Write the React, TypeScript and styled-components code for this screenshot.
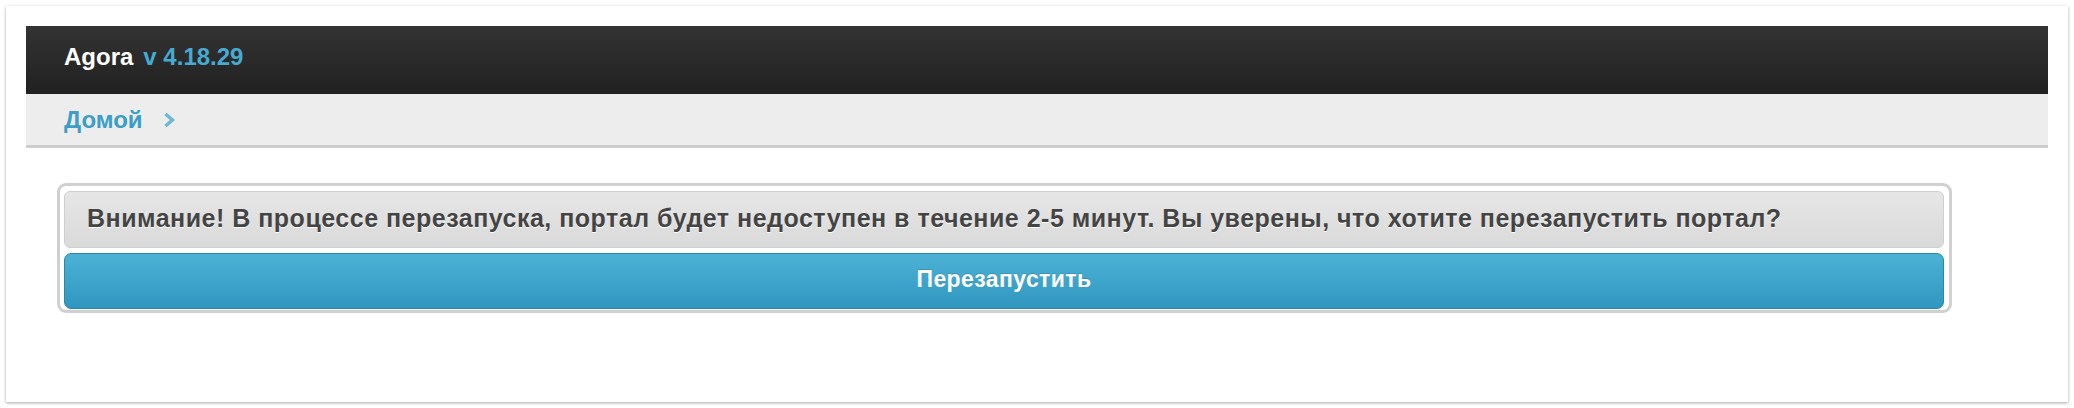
import React from "react";
import styled, { createGlobalStyle } from "styled-components";

const Global = createGlobalStyle`
  html, body { margin: 0; padding: 0; background: #ffffff; }
  body { font-family: "Liberation Sans", Arial, sans-serif; }
  * { box-sizing: border-box; }
`;

const Page = styled.div`
  padding: 6px;
  width: 2074px;
`;

const Card = styled.div`
  background: #fff;
  box-shadow: 0 1px 3px rgba(0, 0, 0, 0.35);
  padding: 20px 20px 90px;
  height: 396px;
`;

const Header = styled.div`
  height: 68px;
  background: linear-gradient(#333333, #212121);
  display: flex;
  align-items: center;
  padding: 0 0 7px 38px;
  font-size: 24px;
  font-weight: bold;
`;

const Brand = styled.span`
  color: #ffffff;
`;

const Version = styled.span`
  color: #46aad1;
  margin-left: 10px;
`;

const Crumbs = styled.div`
  height: 54px;
  background: #ededed;
  border-bottom: 3px solid #cdcdcd;
  display: flex;
  align-items: center;
  padding: 0 0 0 38px;
  gap: 20px;
`;

const CrumbLink = styled.a`
  color: #3b9ec7;
  font-size: 24px;
  font-weight: bold;
  text-decoration: none;
`;

const Chevron = styled.svg`
  width: 12px;
  height: 16px;
  margin-top: 1px;
`;

const Panel = styled.div`
  margin: 35px 0 0 31px;
  width: 1895px;
  border: 3px solid #d0d0d0;
  border-radius: 9px;
  padding: 5px 5px 1px 4px;
  display: flex;
  flex-direction: column;
  gap: 5px;
`;

const Message = styled.div`
  height: 57px;
  border: 1px solid #cfcfcf;
  border-radius: 6px;
  background: linear-gradient(#e6e6e6, #dadada);
  color: #444444;
  font-size: 25px;
  letter-spacing: 0.5px;
  font-weight: bold;
  text-shadow: 0 1px 0 #ffffff;
  display: flex;
  align-items: center;
  padding: 0 0 2px 22px;
  white-space: nowrap;
`;

const Button = styled.button`
  height: 56px;
  border: 1px solid #2a86ab;
  border-radius: 7px;
  background: linear-gradient(#4cb2d5, #3097c0);
  color: #ffffff;
  font-family: "Liberation Sans", Arial, sans-serif;
  font-size: 23px;
  letter-spacing: 0.4px;
  font-weight: bold;
  text-shadow: 0 -1px 0 rgba(0, 0, 0, 0.15);
  cursor: pointer;
  padding: 0 0 3px;
`;

export default function App() {
  return (
    <Page>
      <Global />
      <Card>
        <Header>
          <Brand>Agora</Brand>
          <Version>v 4.18.29</Version>
        </Header>
        <Crumbs>
          <CrumbLink href="#">Домой</CrumbLink>
          <Chevron viewBox="0 0 12 16" aria-hidden="true">
            <polyline
              points="2.5,2 9.5,8 2.5,14"
              fill="none"
              stroke="#6db7d8"
              strokeWidth="3.4"
            />
          </Chevron>
        </Crumbs>
        <Panel>
          <Message>
            Внимание! В процессе перезапуска, портал будет недоступен в течение 2-5 минут. Вы уверены, что хотите перезапустить портал?
          </Message>
          <Button>Перезапустить</Button>
        </Panel>
      </Card>
    </Page>
  );
}
